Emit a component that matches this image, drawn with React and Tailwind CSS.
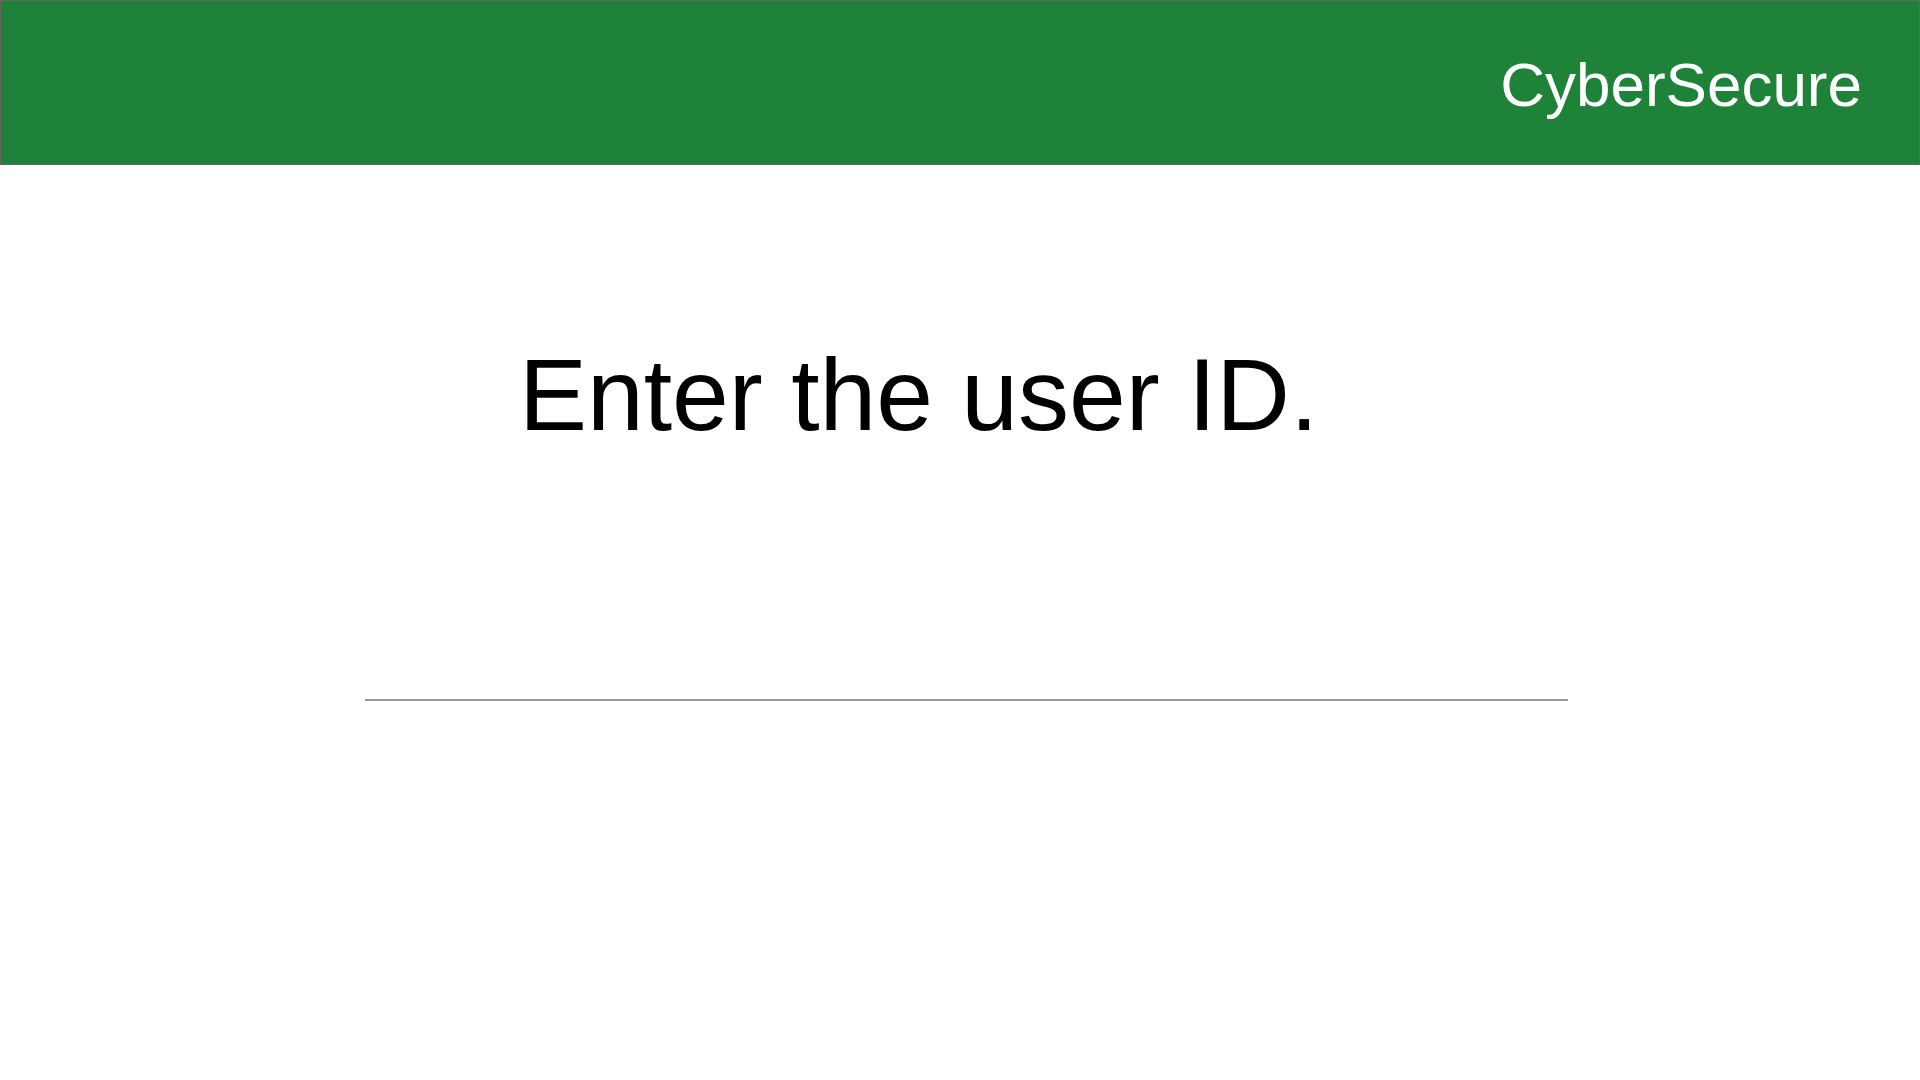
export default function App() {
  return (
    <div className="w-[1920px] h-[1080px] bg-white overflow-hidden" style={{ fontFamily: '"Liberation Sans", Arial, sans-serif' }}>
      <header className="h-[165px] bg-[#1f8239] border border-[#666666] flex justify-end items-start pt-[53px] pr-[57px]">
        <span className="text-white text-[62px] leading-none">CyberSecure</span>
      </header>
      <main className="pt-[179px]">
        <h1 className="pl-[519px] text-[102px] leading-none text-black font-normal">Enter the user ID.</h1>
        <div className="mt-[253px] ml-[365px] w-[1203px] h-[2px] bg-[#999999]" />
      </main>
    </div>
  );
}
